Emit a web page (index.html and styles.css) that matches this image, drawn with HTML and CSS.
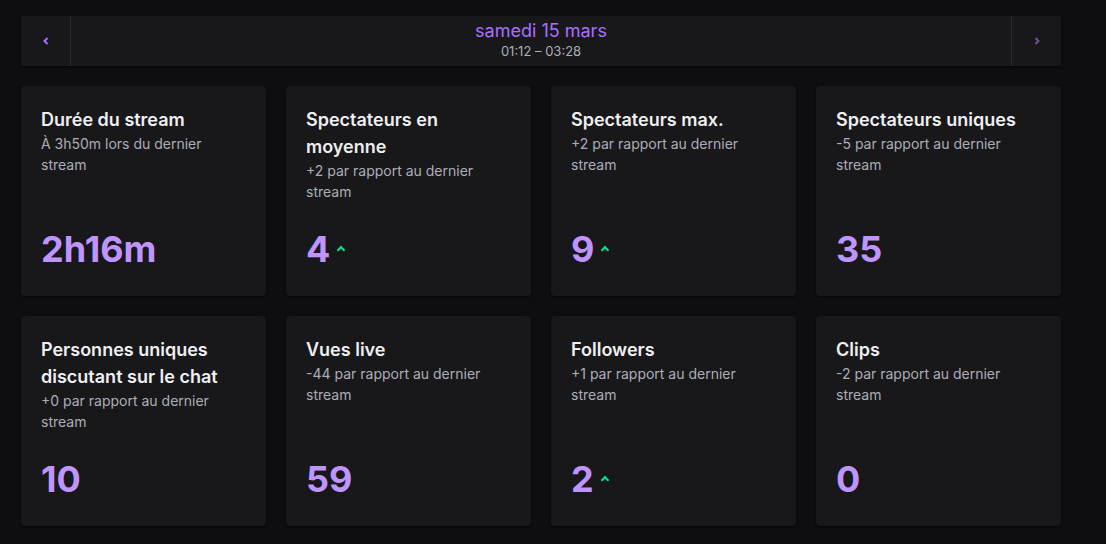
FILE: index.html
```html
<!DOCTYPE html>
<html>
<head>
    <link rel="stylesheet" href="styles.css">
</head>

<body>

    <div class="page">

        <!-- DATE NAV -->
        <div class="datebar">
            <button class="nav-btn">
                <svg width="8" height="10" viewBox="0 0 8 10"><path d="M5.5 2 L2.5 5 L5.5 8" fill="none" stroke="#a970ff" stroke-width="2"/></svg>
            </button>
            <div class="date">
                <div class="date-day">samedi 15 mars</div>
                <div class="date-time">01:12 – 03:28</div>
            </div>
            <button class="nav-btn disabled">
                <svg width="8" height="10" viewBox="0 0 8 10"><path d="M2.5 2 L5.5 5 L2.5 8" fill="none" stroke="#6e4fa0" stroke-width="2"/></svg>
            </button>
        </div>

        <!-- STATS -->
        <div class="stats">

            <div class="card">
                <div class="card-title">Durée du stream</div>
                <div class="card-sub">À 3h50m lors du dernier stream</div>
                <div class="card-value">2h16m</div>
            </div>

            <div class="card">
                <div class="card-title">Spectateurs en moyenne</div>
                <div class="card-sub">+2 par rapport au dernier stream</div>
                <div class="card-value">4<span class="up"></span></div>
            </div>

            <div class="card">
                <div class="card-title">Spectateurs max.</div>
                <div class="card-sub">+2 par rapport au dernier stream</div>
                <div class="card-value">9<span class="up"></span></div>
            </div>

            <div class="card">
                <div class="card-title">Spectateurs uniques</div>
                <div class="card-sub">-5 par rapport au dernier stream</div>
                <div class="card-value">35</div>
            </div>

            <div class="card">
                <div class="card-title">Personnes uniques discutant sur le chat</div>
                <div class="card-sub">+0 par rapport au dernier stream</div>
                <div class="card-value">10</div>
            </div>

            <div class="card">
                <div class="card-title">Vues live</div>
                <div class="card-sub">-44 par rapport au dernier stream</div>
                <div class="card-value">59</div>
            </div>

            <div class="card">
                <div class="card-title">Followers</div>
                <div class="card-sub">+1 par rapport au dernier stream</div>
                <div class="card-value">2<span class="up"></span></div>
            </div>

            <div class="card">
                <div class="card-title">Clips</div>
                <div class="card-sub">-2 par rapport au dernier stream</div>
                <div class="card-value">0</div>
            </div>

        </div>
    </div>

</body>

</html>
```

FILE: styles.css
```css
body {
    margin: 0;
    background-color: #0e0e10;
    font-family: Inter, "Noto Sans", sans-serif;
    color: #efeff1;
}

.page {
    width: 1040px;
    padding: 16px 21px;
}

.datebar {
    display: flex;
    height: 50px;
    background-color: #18181b;
    box-shadow: 0 1px 2px rgba(0, 0, 0, 0.6);
}

.nav-btn {
    width: 50px;
    border: none;
    background-color: #18181b;
    display: flex;
    align-items: center;
    justify-content: center;
    padding: 0;
    cursor: pointer;
}

.nav-btn:first-child {
    border-right: 1px solid #2a2a2e;
}

.nav-btn:last-child {
    border-left: 1px solid #2a2a2e;
}

.date {
    flex: 1;
    display: flex;
    flex-direction: column;
    align-items: center;
    padding-top: 4px;
}

.date-day {
    color: #a970ff;
    font-size: 18px;
    line-height: 22px;
}

.date-time {
    color: #adadb8;
    font-size: 13px;
    line-height: 18px;
}

.stats {
    display: grid;
    grid-template-columns: repeat(4, 1fr);
    gap: 20px;
    margin-top: 20px;
}

.card {
    height: 210px;
    box-sizing: border-box;
    padding: 20px 20px 27px;
    background-color: #18181b;
    border-radius: 4px;
    box-shadow: 0 1px 2px rgba(0, 0, 0, 0.6);
    display: flex;
    flex-direction: column;
}

.card-title {
    font-size: 18px;
    font-weight: 600;
    line-height: 27px;
}

.card-sub {
    font-size: 14px;
    line-height: 21px;
    color: #adadb8;
}

.card-value {
    margin-top: auto;
    font-size: 36px;
    font-weight: 700;
    line-height: 40px;
    color: #bf94ff;
    display: flex;
    align-items: center;
}

.up {
    width: 4px;
    height: 4px;
    margin-left: 8px;
    margin-top: 2px;
    border-top: 2px solid #00e38f;
    border-left: 2px solid #00e38f;
    transform: rotate(45deg);
}
```
